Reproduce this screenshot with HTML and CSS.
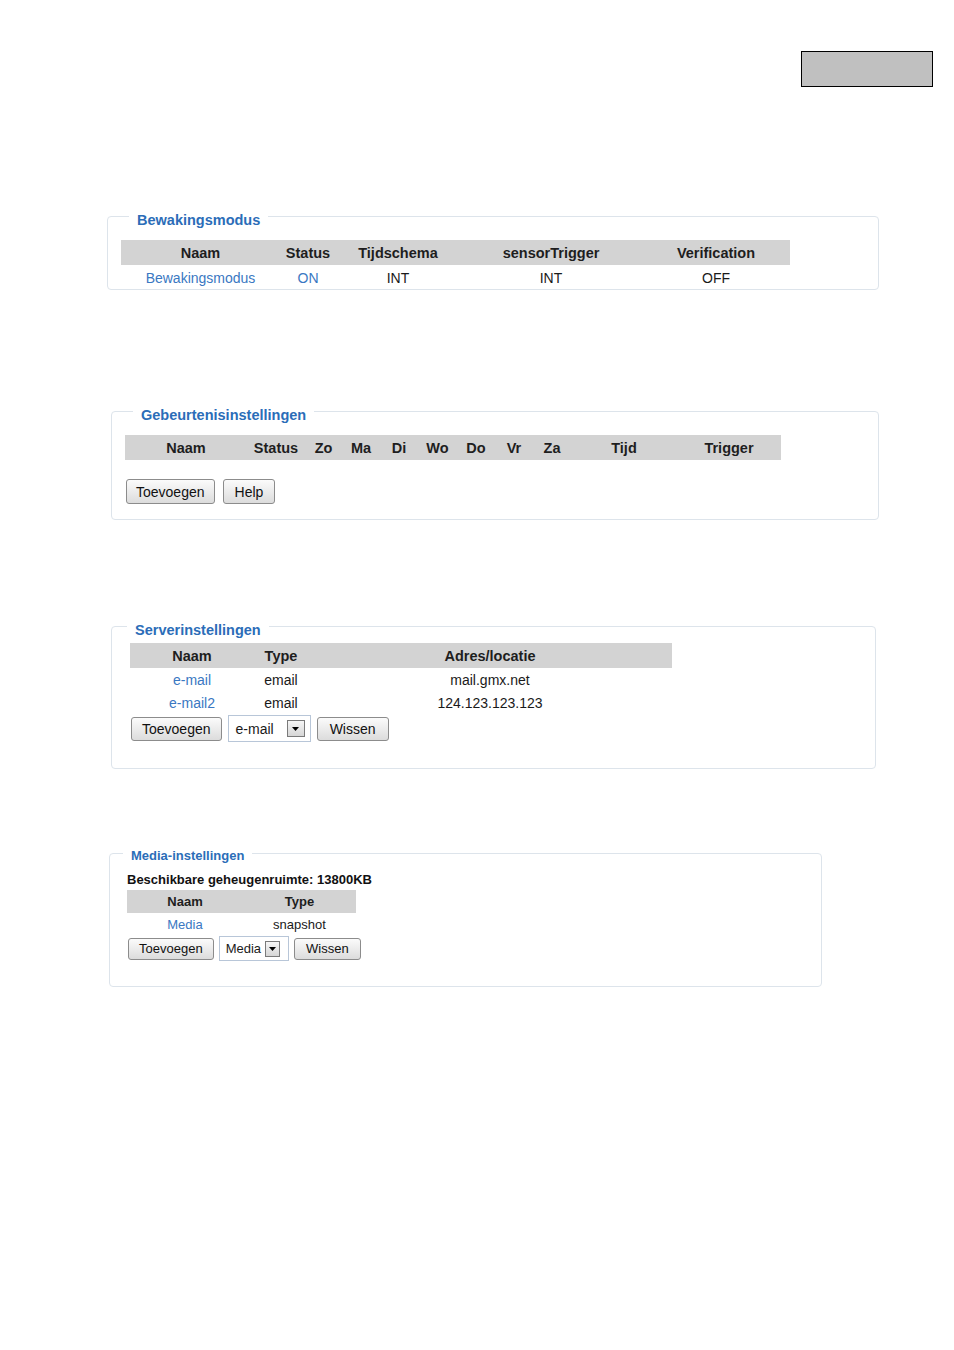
FILE: index.html
```html
<!DOCTYPE html>
<html lang="nl">
<head>
    <meta charset="UTF-8">
    <title>Instellingen</title>
    <link rel="stylesheet" href="styles.css">
</head>
<body>
    <div class="topbar">
        <div class="grey-box"></div>
    </div>

    <fieldset class="panel panel-mode">
        <legend>Bewakingsmodus</legend>
        <table class="grid grid-mode">
            <colgroup><col><col><col><col><col></colgroup>
            <tr>
                <th>Naam</th>
                <th>Status</th>
                <th>Tijdschema</th>
                <th>sensorTrigger</th>
                <th>Verification</th>
            </tr>
            <tr>
                <td><a href="#">Bewakingsmodus</a></td>
                <td><a href="#">ON</a></td>
                <td>INT</td>
                <td>INT</td>
                <td>OFF</td>
            </tr>
        </table>
    </fieldset>

    <fieldset class="panel panel-events">
        <legend>Gebeurtenisinstellingen</legend>
        <table class="grid grid-events">
            <colgroup><col><col><col><col><col><col><col><col><col><col><col></colgroup>
            <tr>
                <th>Naam</th>
                <th>Status</th>
                <th>Zo</th>
                <th>Ma</th>
                <th>Di</th>
                <th>Wo</th>
                <th>Do</th>
                <th>Vr</th>
                <th>Za</th>
                <th>Tijd</th>
                <th>Trigger</th>
            </tr>
        </table>
        <div class="actions">
            <button class="btn">Toevoegen</button>
            <button class="btn btn-short">Help</button>
        </div>
    </fieldset>

    <fieldset class="panel panel-server">
        <legend>Serverinstellingen</legend>
        <table class="grid grid-server">
            <colgroup><col><col><col></colgroup>
            <tr>
                <th>Naam</th>
                <th>Type</th>
                <th>Adres/locatie</th>
            </tr>
            <tr>
                <td><a href="#">e-mail</a></td>
                <td>email</td>
                <td>mail.gmx.net</td>
            </tr>
            <tr>
                <td><a href="#">e-mail2</a></td>
                <td>email</td>
                <td>124.123.123.123</td>
            </tr>
        </table>
        <div class="actions">
            <button class="btn">Toevoegen</button>
            <span class="select">
                <span class="select-value">e-mail</span>
                <span class="select-arrow"><svg width="7" height="4" viewBox="0 0 7 4"><path d="M0 0h7L3.5 4z" fill="#000"/></svg></span>
            </span>
            <button class="btn btn-short">Wissen</button>
        </div>
    </fieldset>

    <fieldset class="panel panel-media">
        <legend>Media-instellingen</legend>
        <div class="memory">Beschikbare geheugenruimte: 13800KB</div>
        <table class="grid grid-media">
            <colgroup><col><col></colgroup>
            <tr>
                <th>Naam</th>
                <th>Type</th>
            </tr>
            <tr>
                <td><a href="#">Media</a></td>
                <td>snapshot</td>
            </tr>
        </table>
        <div class="actions">
            <button class="btn">Toevoegen</button>
            <span class="select">
                <span class="select-value">Media</span>
                <span class="select-arrow"><svg width="7" height="4" viewBox="0 0 7 4"><path d="M0 0h7L3.5 4z" fill="#000"/></svg></span>
            </span>
            <button class="btn btn-short">Wissen</button>
        </div>
    </fieldset>
</body>
</html>
```

FILE: styles.css
```css
body {
    margin: 0;
    font-family: "Liberation Sans", Arial, sans-serif;
    color: #1a1a1a;
    background-color: #ffffff;
}
a {
    color: #3a78c2;
    text-decoration: none;
}
.topbar {
    display: flex;
    justify-content: flex-end;
    padding: 51px 21px 0 0;
}
.grey-box {
    width: 132px;
    height: 36px;
    box-sizing: border-box;
    background-color: #c0c0c0;
    border: 1px solid #000000;
}

/* fieldset panels */
.panel {
    box-sizing: border-box;
    min-width: 0;
    margin: 0;
    padding: 11px 13px 0 13px;
    border: 1px solid #dde4eb;
    border-radius: 4px;
}
.panel legend {
    margin-left: 8px;
    padding: 8px 8px 0 8px;
    line-height: 17px;
    font-size: 14.5px;
    font-weight: bold;
    color: #2b6db8;
}
.panel-mode {
    width: 772px;
    margin: 117px 0 0 107px;
}
.panel-events {
    width: 768px;
    margin: 109px 0 0 111px;
    padding-bottom: 15px;
}
.panel-server {
    width: 765px;
    margin: 94px 0 0 111px;
    padding: 4px 13px 26px 18px;
}
.panel-server legend {
    margin-left: -3px;
}
.panel-media {
    width: 713px;
    margin: 73px 0 0 109px;
    padding: 8px 13px 25px 17px;
}
.panel-media legend {
    margin-left: -4px;
    padding-top: 6px;
    line-height: 16px;
    font-size: 13px;
}

/* tables */
.grid {
    border-collapse: collapse;
    border-spacing: 0;
    table-layout: fixed;
}
.grid th {
    height: 25px;
    padding: 0;
    background-color: #d3d3d3;
    font-size: 14.5px;
    font-weight: bold;
    color: #1e1e1e;
    text-align: center;
    white-space: nowrap;
}
.grid td {
    height: 23px;
    padding: 1px 0 0 0;
    font-size: 14px;
    text-align: center;
    white-space: nowrap;
}
.grid-mode { width: 669px; }
.grid-mode col:nth-child(1) { width: 159px; }
.grid-mode col:nth-child(2) { width: 56px; }
.grid-mode col:nth-child(3) { width: 124px; }
.grid-mode col:nth-child(4) { width: 182px; }
.grid-mode col:nth-child(5) { width: 148px; }

.grid-events { width: 656px; }
.grid-events col { width: 38px; }
.grid-events col:nth-child(1) { width: 122px; }
.grid-events col:nth-child(2) { width: 58px; }
.grid-events col:nth-child(3) { width: 37px; }
.grid-events col:nth-child(6) { width: 39px; }
.grid-events col:nth-child(10) { width: 106px; }
.grid-events col:nth-child(11) { width: 104px; }

.grid-server { width: 542px; }
.grid-server col:nth-child(1) { width: 124px; }
.grid-server col:nth-child(2) { width: 54px; }
.grid-server col:nth-child(3) { width: 364px; }
.grid-server td { height: 22px; }

.grid-media { width: 229px; margin-top: 2px; }
.grid-media col:nth-child(1) { width: 116px; }
.grid-media col:nth-child(2) { width: 113px; }
.grid-media th { height: 23px; font-size: 13px; }
.grid-media td { height: 23px; padding: 0; font-size: 13px; }

.memory {
    line-height: 16px;
    font-size: 13px;
    font-weight: bold;
    color: #111111;
}

/* buttons and select */
.actions {
    display: flex;
    align-items: center;
    gap: 6px;
}
.btn {
    box-sizing: border-box;
    height: 24px;
    margin: 0;
    padding: 0 10px;
    font-family: inherit;
    font-size: 14px;
    color: #111111;
    background: linear-gradient(#fbfbfb, #dcdcdc);
    border: 1px solid #8c8c8c;
    border-radius: 3px;
}
.btn.btn-short {
    padding: 0 12px;
}
.select {
    box-sizing: border-box;
    display: inline-flex;
    align-items: center;
    justify-content: space-between;
    height: 27px;
    padding: 0 5px 0 7px;
    font-size: 14px;
    background-color: #ffffff;
    border: 1px solid #b8c6d8;
}
.select-arrow {
    box-sizing: border-box;
    display: inline-flex;
    align-items: center;
    justify-content: center;
    width: 18px;
    height: 17px;
    margin-left: 13px;
    background: linear-gradient(#f6f6f6, #d6d6d6);
    border: 1px solid #7a7a7a;
}
.panel-events .actions {
    gap: 8px;
    margin: 19px 0 0 1px;
}
.panel-events .btn {
    height: 25px;
    padding: 0 9px;
}
.panel-events .btn.btn-short {
    padding: 0 11px;
}
.panel-server .actions {
    height: 27px;
    margin: 1px 0 0 1px;
}
.panel-media .actions {
    height: 25px;
    gap: 5px;
    margin-left: 1px;
}
.panel-media .btn {
    height: 22px;
    font-size: 13px;
}
.panel-media .btn.btn-short {
    padding: 0 11px;
}
.panel-media .select {
    height: 25px;
    padding: 0 8px 0 6px;
    font-size: 13px;
}
.panel-media .select-arrow {
    width: 15px;
    height: 16px;
    margin-left: 4px;
}
```
